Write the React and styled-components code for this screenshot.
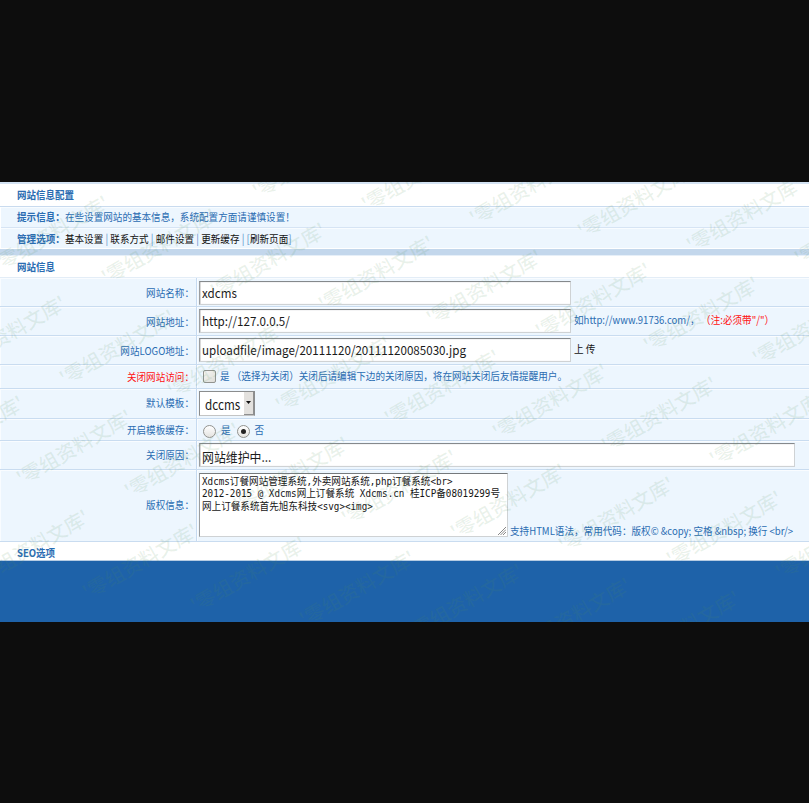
import React from 'react';
import styled, { createGlobalStyle } from 'styled-components';

const Global = createGlobalStyle`
  * { box-sizing: border-box; }
  body { margin: 0; background: #0d0d0d; }
`;

const Stage = styled.div`
  width: 809px;
  height: 803px;
  padding-top: 182px;
  background: #0d0d0d;
  overflow: hidden;
  font-family: "Noto Sans CJK SC", sans-serif;
  font-size: 9.58px;
  line-height: 14px;
  color: #2a6cb2;
  white-space: pre;
`;

const Page = styled.main`
  position: relative;
  height: 440px;
  background: #1e62a9;
  overflow: hidden;
`;

/* Slightly condensed lettering used for all the page's captions. */
const Tall = styled.span`
  display: inline-block;
  transform: translateY(-0.5px) scaleY(1.12);
`;

const Heading = styled.h2`
  margin: 0;
  height: ${(p) => p.$height}px;
  padding: ${(p) => p.$top}px 0 0 17px;
  background: #fff;
  border-bottom: 1px solid ${(p) => p.$line || '#c9dbef'};
  font-size: 9.5px;
  font-weight: 700;
  line-height: 14px;
`;

const TopRule = styled.div`
  height: 2px;
  background: #d3e2f2;
`;

const InfoRow = styled.div`
  height: ${(p) => p.$height}px;
  padding: ${(p) => p.$top}px 0 0 16px;
  margin-left: 1px;
  background: #edf6fe;
  box-shadow: -1px 0 #fff;
  border-bottom: 1px solid ${(p) => p.$line};
  border-top: 1px solid #f8fcff;
`;

const Band = styled.div`
  height: 7px;
  background: #c3d7ec;
  border-bottom: 1px solid #e6eff8;
`;

const Link = styled.a`
  color: #111;
`;

const Sep = styled.span`
  color: #5b92cb;
  font-size: 9.9px;
`;

const FormRow = styled.div`
  display: grid;
  grid-template-columns: 197px 1fr;
  height: ${(p) => p.$height}px;
  border-bottom: 1px solid #c9dcf0;
  background: #edf6fe;
  box-shadow: inset 1px 1px #f9fcff;
`;

const Label = styled.label`
  display: flex;
  align-items: flex-start;
  justify-content: flex-end;
  padding: ${(p) => p.$top}px 2px 0 0;
  border-right: 1px solid #c6daf0;
  color: ${(p) => (p.$alert ? '#ff1010' : 'inherit')};
`;

const Cell = styled.div`
  display: flex;
  align-items: flex-start;
  padding: ${(p) => p.$top}px 0 0 2px;
  box-shadow: inset 1px 0 #f9fcff;
`;

const Field = styled.input`
  width: ${(p) => p.$width || 372}px;
  height: 22px;
  padding: 0 2px;
  border: 1px solid #cfd2d4;
  border-top-color: #85898c;
  border-left-color: #9a9da0;
  background: #fff;
  box-shadow: inset 1px 0 #d9d9d9;
  font-family: inherit;
  font-size: ${(p) => p.$size || 11.6}px;
  color: #1b1b1b;
  outline: 0;
  transform: scaleY(1.09);
  transform-origin: 0 0;
`;

const Note = styled(Tall)`
  margin: ${(p) => p.$top}px 0 0 ${(p) => p.$left}px;
  color: ${(p) => p.$color || 'inherit'};
`;

const Check = styled.span`
  width: 13px;
  height: 13px;
  margin: 5px 0 0 4px;
  border: 1px solid #91938f;
  border-radius: 2px;
  background: linear-gradient(135deg, #f6f6f4, #deddd8);
`;

const Radio = styled.span`
  display: grid;
  place-items: center;
  width: 13px;
  height: 13px;
  margin: 6px 0 0 ${(p) => p.$left}px;
  border: 1px solid #92938f;
  border-radius: 50%;
  background: linear-gradient(#fff, #e4e3e0);
`;

const Dot = styled.i`
  width: 5px;
  height: 5px;
  border-radius: 50%;
  background: #222;
`;

const Select = styled.div`
  display: flex;
  justify-content: space-between;
  width: 56px;
  height: 25px;
  padding-left: 5px;
  border: 1px solid #8b8d8e;
  border-bottom-color: #c4c4c4;
  background: #fff;
  font-size: 11.7px;
  line-height: 25px;
  color: #1b1b1b;
`;

const SelectArrow = styled.span`
  display: grid;
  justify-content: center;
  padding-top: 9px;
  width: 10px;
  background: #e3e1de;
  border-right: 1px solid #8f8f8f;
  border-bottom: 1px solid #8f8f8f;
`;

const Editor = styled.div`
  position: relative;
  width: 309px;
  height: 64px;
  padding: 2px 0 0 2px;
  border: 1px solid #cfd2d4;
  border-top-color: #75797c;
  border-left-color: #9a9da0;
  background: #fff;
  color: #151515;
`;

const EditorLine = styled.div`
  height: 12.4px;
  line-height: 12.4px;
  font-size: 9.6px;
  transform: translateY(-1px) scaleY(1.12);
`;

const Mono = styled.span`
  font-family: "DejaVu Sans Mono", monospace;
  font-size: 9.25px;
`;

const Grip = styled.svg`
  position: absolute;
  right: 1px;
  bottom: 1px;
`;

const Watermarks = styled.div`
  position: absolute;
  inset: 0;
  pointer-events: none;
`;

const Mark = styled.span`
  position: absolute;
  transform: rotate(-30deg);
  transform-origin: 0 100%;
  font-size: 19.6px;
  font-weight: 500;
  line-height: 20px;
  color: rgba(80, 145, 90, 0.12);
`;

const marks = [];
for (let row = 0; row < 6; row += 1) {
  for (let col = -4; col < 8; col += 1) {
    const left = 367.5 - 42.6 * row + 108.4 * col;
    const top = 30 + 100.3 * row + 13.5 * col;
    if (left > -110 && left < 806 && top > 10 && top < 500) marks.push({ left, top });
  }
}

const copyright = [
  'Xdcms订餐网站管理系统,外卖网站系统,php订餐系统<br>',
  '2012-2015 @ Xdcms网上订餐系统 Xdcms.cn 桂ICP备08019299号',
  '网上订餐系统首先旭东科技<svg><img>',
];

const EditorText = ({ text }) => (
  <EditorLine>
    {text.split(/([\x20-\x7e]+)/).map((run, i) => (i % 2 ? <Mono key={i}>{run}</Mono> : run))}
  </EditorLine>
);

const links = ['基本设置', '联系方式', '邮件设置', '更新缓存'];

export default function App() {
  return (
    <Stage>
      <Global />
      <Page>
        <TopRule />
        <Heading $height={23} $top={4}><Tall>网站信息配置</Tall></Heading>
        <InfoRow $height={21} $top={2} $line="#d6e4f4">
          <Tall><b>提示信息：</b>在些设置网站的基本信息，系统配置方面请谨慎设置！</Tall>
        </InfoRow>
        <InfoRow $height={21} $top={3} $line="#fff">
          <Tall>
            <b>管理选项：</b>
            {links.map((text) => (
              <React.Fragment key={text}><Link>{text}</Link><Sep> | </Sep></React.Fragment>
            ))}
            <Sep>[</Sep><Link>刷新页面</Link><Sep>]</Sep>
          </Tall>
        </InfoRow>
        <Band />
        <Heading $height={22} $top={4} $line="#e3edf7"><Tall>网站信息</Tall></Heading>
        <FormRow $height={29}>
          <Label $top={8}><Tall>网站名称：</Tall></Label>
          <Cell $top={3}><Field defaultValue="xdcms" /></Cell>
        </FormRow>
        <FormRow $height={29}>
          <Label $top={8}><Tall>网站地址：</Tall></Label>
          <Cell $top={2}>
            <Field defaultValue="http://127.0.0.5/" />
            <Note $top={4} $left={3}>如http://www.91736.com/，</Note>
            <Note $top={4} $left={1.5} $color="#ff1010">（注:必须带"/"）</Note>
          </Cell>
        </FormRow>
        <FormRow $height={29}>
          <Label $top={8}><Tall>网站LOGO地址：</Tall></Label>
          <Cell $top={2}>
            <Field defaultValue="uploadfile/image/20111120/20111120085030.jpg" />
            <Note $top={4} $left={3} $color="#111">上 传</Note>
          </Cell>
        </FormRow>
        <FormRow $height={24}>
          <Label $top={5} $alert><Tall>关闭网站访问：</Tall></Label>
          <Cell $top={0}>
            <Check />
            <Note $top={4} $left={4}>是 （选择为关闭）关闭后请编辑下边的关闭原因，将在网站关闭后友情提醒用户。</Note>
          </Cell>
        </FormRow>
        <FormRow $height={30}>
          <Label $top={7}><Tall>默认模板：</Tall></Label>
          <Cell $top={2}>
            <Select>
              <Tall>dccms</Tall>
              <SelectArrow>
                <svg width="5" height="4" viewBox="0 0 5 4"><path d="M0 0h5L2.5 3z" fill="#111" /></svg>
              </SelectArrow>
            </Select>
          </Cell>
        </FormRow>
        <FormRow $height={22}>
          <Label $top={4}><Tall>开启模板缓存：</Tall></Label>
          <Cell $top={0}>
            <Radio $left={4} />
            <Note $top={4} $left={5}>是</Note>
            <Radio $left={6}><Dot /></Radio>
            <Note $top={4} $left={5}>否</Note>
          </Cell>
        </FormRow>
        <FormRow $height={29}>
          <Label $top={7}><Tall>关闭原因：</Tall></Label>
          <Cell $top={2}><Field $width={596} $size={11.9} defaultValue="网站维护中..." /></Cell>
        </FormRow>
        <FormRow $height={72}>
          <Label $top={28}><Tall>版权信息：</Tall></Label>
          <Cell $top={3}>
            <Editor>
              {copyright.map((text) => <EditorText key={text} text={text} />)}
              <Grip width="8" height="8" viewBox="0 0 8 8">
                <path d="M0 8L8 0M2.5 8L8 2.5M5 8L8 5" stroke="#888" fill="none" />
              </Grip>
            </Editor>
            <Note $top={51} $left={2}>{'支持HTML语法，常用代码：版权© &copy; 空格 &nbsp; 换行 <br/>'}</Note>
          </Cell>
        </FormRow>
        <Heading $height={19} $top={4} $line="#b5cbe2"><Tall>SEO选项</Tall></Heading>
        <Watermarks>
          {marks.map(({ left, top }) => (
            <Mark key={`${left},${top}`} style={{ left, top: top - 18 }}>'零组资料文库'</Mark>
          ))}
        </Watermarks>
      </Page>
    </Stage>
  );
}
